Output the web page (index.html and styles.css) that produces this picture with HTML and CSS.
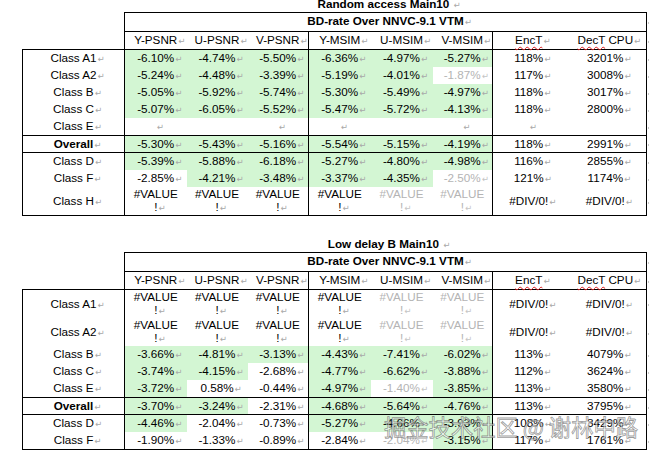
FILE: index.html
```html
<!DOCTYPE html>
<html>
<head>
<meta charset="utf-8">
<link rel="stylesheet" href="styles.css">
</head>
<body>
<div class="page">
  <p class="title t1">Random access Main10&nbsp;<i class="pm">↵</i></p>
  <table class="bd">
    <colgroup>
      <col class="c-lab"><col class="c-62"><col class="c-61"><col class="c-61"><col class="c-62"><col class="c-62"><col class="c-60"><col class="c-enc"><col class="c-dec"><col class="c-eor">
    </colgroup>
    <tr class="h1"><td class="corner" rowspan="2"></td><th class="bdh" colspan="8">BD-rate Over NNVC-9.1 VTM<i class="pm">↵</i></th><td class="eor"><b></b></td></tr>
    <tr class="h2"><th>Y-PSNR<i class="pm">↵</i></th><th>U-PSNR<i class="pm">↵</i></th><th>V-PSNR<i class="pm">↵</i></th><th>Y-MSIM<i class="pm">↵</i></th><th>U-MSIM<i class="pm">↵</i></th><th>V-MSIM<i class="pm">↵</i></th><th><span class="sp">EncT</span><i class="pm">↵</i></th><th><span class="sp">DecT</span> CPU<i class="pm">↵</i></th><td class="eor"><b></b></td></tr>
    <tr class="r"><td>Class A1<i class="pm">↵</i></td><td class="g">-6.10%<i class="pm">↵</i></td><td class="g">-4.74%<i class="pm">↵</i></td><td class="g">-5.50%<i class="pm">↵</i></td><td class="g">-6.36%<i class="pm">↵</i></td><td class="g">-4.97%<i class="pm">↵</i></td><td class="g">-5.27%<i class="pm">↵</i></td><td>118%<i class="pm">↵</i></td><td>3201%<i class="pm">↵</i></td><td class="eor"><b></b></td></tr>
    <tr class="r"><td>Class A2<i class="pm">↵</i></td><td class="g">-5.24%<i class="pm">↵</i></td><td class="g">-4.48%<i class="pm">↵</i></td><td class="g">-3.39%<i class="pm">↵</i></td><td class="g">-5.19%<i class="pm">↵</i></td><td class="g">-4.01%<i class="pm">↵</i></td><td class="n">-1.87%<i class="pm">↵</i></td><td>117%<i class="pm">↵</i></td><td>3008%<i class="pm">↵</i></td><td class="eor"><b></b></td></tr>
    <tr class="r"><td>Class B<i class="pm">↵</i></td><td class="g">-5.05%<i class="pm">↵</i></td><td class="g">-5.92%<i class="pm">↵</i></td><td class="g">-5.74%<i class="pm">↵</i></td><td class="g">-5.30%<i class="pm">↵</i></td><td class="g">-5.49%<i class="pm">↵</i></td><td class="g">-4.97%<i class="pm">↵</i></td><td>118%<i class="pm">↵</i></td><td>3017%<i class="pm">↵</i></td><td class="eor"><b></b></td></tr>
    <tr class="r"><td>Class C<i class="pm">↵</i></td><td class="g">-5.07%<i class="pm">↵</i></td><td class="g">-6.05%<i class="pm">↵</i></td><td class="g">-5.52%<i class="pm">↵</i></td><td class="g">-5.47%<i class="pm">↵</i></td><td class="g">-5.72%<i class="pm">↵</i></td><td class="g">-4.13%<i class="pm">↵</i></td><td>118%<i class="pm">↵</i></td><td>2800%<i class="pm">↵</i></td><td class="eor"><b></b></td></tr>
    <tr class="r re"><td>Class E<i class="pm">↵</i></td><td><i class="pm">↵</i></td><td></td><td><i class="pm">↵</i></td><td><i class="pm">↵</i></td><td></td><td><i class="pm">↵</i></td><td><i class="pm">↵</i></td><td></td><td class="eor"><b></b></td></tr>
    <tr class="r ov"><td><b class="bo">Overall</b><i class="pm">↵</i></td><td class="g">-5.30%<i class="pm">↵</i></td><td class="g">-5.43%<i class="pm">↵</i></td><td class="g">-5.16%<i class="pm">↵</i></td><td class="g">-5.54%<i class="pm">↵</i></td><td class="g">-5.15%<i class="pm">↵</i></td><td class="g">-4.19%<i class="pm">↵</i></td><td>118%<i class="pm">↵</i></td><td>2991%<i class="pm">↵</i></td><td class="eor"><b></b></td></tr>
    <tr class="r rd"><td>Class D<i class="pm">↵</i></td><td class="g">-5.39%<i class="pm">↵</i></td><td class="g">-5.88%<i class="pm">↵</i></td><td class="g">-6.18%<i class="pm">↵</i></td><td class="g">-5.27%<i class="pm">↵</i></td><td class="g">-4.80%<i class="pm">↵</i></td><td class="g">-4.98%<i class="pm">↵</i></td><td>116%<i class="pm">↵</i></td><td>2855%<i class="pm">↵</i></td><td class="eor"><b></b></td></tr>
    <tr class="r rd"><td>Class F<i class="pm">↵</i></td><td>-2.85%<i class="pm">↵</i></td><td class="g">-4.21%<i class="pm">↵</i></td><td class="g">-3.48%<i class="pm">↵</i></td><td class="g">-3.37%<i class="pm">↵</i></td><td class="g">-4.35%<i class="pm">↵</i></td><td class="n">-2.50%<i class="pm">↵</i></td><td>121%<i class="pm">↵</i></td><td>1174%<i class="pm">↵</i></td><td class="eor"><b></b></td></tr>
    <tr class="r2 last"><td>Class H<i class="pm">↵</i></td><td>#VALUE<br>!<i class="pm">↵</i></td><td>#VALUE<br>!<i class="pm">↵</i></td><td>#VALUE<br>!<i class="pm">↵</i></td><td>#VALUE<br>!<i class="pm">↵</i></td><td class="n">#VALUE<br>!<i class="pm">↵</i></td><td class="n">#VALUE<br>!<i class="pm">↵</i></td><td>#DIV/0!<i class="pm">↵</i></td><td>#DIV/0!<i class="pm">↵</i></td><td class="eor"><b></b></td></tr>
  </table>

  <p class="title t2">Low delay B Main10&nbsp;<i class="pm">↵</i></p>
  <table class="bd">
    <colgroup>
      <col class="c-lab"><col class="c-62"><col class="c-61"><col class="c-61"><col class="c-62"><col class="c-62"><col class="c-60"><col class="c-enc"><col class="c-dec"><col class="c-eor">
    </colgroup>
    <tr class="h1"><td class="corner" rowspan="2"></td><th class="bdh" colspan="8">BD-rate Over NNVC-9.1 VTM<i class="pm">↵</i></th><td class="eor"><b></b></td></tr>
    <tr class="h2"><th>Y-PSNR<i class="pm">↵</i></th><th>U-PSNR<i class="pm">↵</i></th><th>V-PSNR<i class="pm">↵</i></th><th>Y-MSIM<i class="pm">↵</i></th><th>U-MSIM<i class="pm">↵</i></th><th>V-MSIM<i class="pm">↵</i></th><th><span class="sp">EncT</span><i class="pm">↵</i></th><th><span class="sp">DecT</span> CPU<i class="pm">↵</i></th><td class="eor"><b></b></td></tr>
    <tr class="r2"><td>Class A1<i class="pm">↵</i></td><td>#VALUE<br>!<i class="pm">↵</i></td><td>#VALUE<br>!<i class="pm">↵</i></td><td>#VALUE<br>!<i class="pm">↵</i></td><td>#VALUE<br>!<i class="pm">↵</i></td><td class="n">#VALUE<br>!<i class="pm">↵</i></td><td class="n">#VALUE<br>!<i class="pm">↵</i></td><td>#DIV/0!<i class="pm">↵</i></td><td>#DIV/0!<i class="pm">↵</i></td><td class="eor"><b></b></td></tr>
    <tr class="r2"><td>Class A2<i class="pm">↵</i></td><td>#VALUE<br>!<i class="pm">↵</i></td><td>#VALUE<br>!<i class="pm">↵</i></td><td>#VALUE<br>!<i class="pm">↵</i></td><td>#VALUE<br>!<i class="pm">↵</i></td><td class="n">#VALUE<br>!<i class="pm">↵</i></td><td class="n">#VALUE<br>!<i class="pm">↵</i></td><td>#DIV/0!<i class="pm">↵</i></td><td>#DIV/0!<i class="pm">↵</i></td><td class="eor"><b></b></td></tr>
    <tr class="r"><td>Class B<i class="pm">↵</i></td><td class="g">-3.66%<i class="pm">↵</i></td><td class="g">-4.81%<i class="pm">↵</i></td><td class="g">-3.13%<i class="pm">↵</i></td><td class="g">-4.43%<i class="pm">↵</i></td><td class="g">-7.41%<i class="pm">↵</i></td><td class="g">-6.02%<i class="pm">↵</i></td><td>113%<i class="pm">↵</i></td><td>4079%<i class="pm">↵</i></td><td class="eor"><b></b></td></tr>
    <tr class="r"><td>Class C<i class="pm">↵</i></td><td class="g">-3.74%<i class="pm">↵</i></td><td class="g">-4.15%<i class="pm">↵</i></td><td>-2.68%<i class="pm">↵</i></td><td class="g">-4.77%<i class="pm">↵</i></td><td class="g">-6.62%<i class="pm">↵</i></td><td class="g">-3.88%<i class="pm">↵</i></td><td>112%<i class="pm">↵</i></td><td>3624%<i class="pm">↵</i></td><td class="eor"><b></b></td></tr>
    <tr class="r"><td>Class E<i class="pm">↵</i></td><td class="g">-3.72%<i class="pm">↵</i></td><td>0.58%<i class="pm">↵</i></td><td>-0.44%<i class="pm">↵</i></td><td class="g">-4.97%<i class="pm">↵</i></td><td class="n">-1.40%<i class="pm">↵</i></td><td class="g">-3.85%<i class="pm">↵</i></td><td>113%<i class="pm">↵</i></td><td>3580%<i class="pm">↵</i></td><td class="eor"><b></b></td></tr>
    <tr class="r ov"><td><b class="bo">Overall</b><i class="pm">↵</i></td><td class="g">-3.70%<i class="pm">↵</i></td><td class="g">-3.24%<i class="pm">↵</i></td><td>-2.31%<i class="pm">↵</i></td><td class="g">-4.68%<i class="pm">↵</i></td><td class="g">-5.64%<i class="pm">↵</i></td><td class="g">-4.76%<i class="pm">↵</i></td><td>113%<i class="pm">↵</i></td><td>3795%<i class="pm">↵</i></td><td class="eor"><b></b></td></tr>
    <tr class="r"><td>Class D<i class="pm">↵</i></td><td class="g">-4.46%<i class="pm">↵</i></td><td>-2.04%<i class="pm">↵</i></td><td>-0.73%<i class="pm">↵</i></td><td class="g">-5.27%<i class="pm">↵</i></td><td class="g">-4.66%<i class="pm">↵</i></td><td class="g">-3.93%<i class="pm">↵</i></td><td>108%<i class="pm">↵</i></td><td>3429%<i class="pm">↵</i></td><td class="eor"><b></b></td></tr>
    <tr class="r last"><td>Class F<i class="pm">↵</i></td><td>-1.90%<i class="pm">↵</i></td><td>-1.33%<i class="pm">↵</i></td><td>-0.89%<i class="pm">↵</i></td><td>-2.84%<i class="pm">↵</i></td><td class="n">-2.04%<i class="pm">↵</i></td><td class="g">-3.15%<i class="pm">↵</i></td><td>117%<i class="pm">↵</i></td><td>1761%<i class="pm">↵</i></td><td class="eor"><b></b></td></tr>
  </table>

  <div class="wm">掘金技术社区 @ 谢林中路</div>
</div>
</body>
</html>
```
FILE: styles.css
```css
html, body {
  margin: 0;
  padding: 0;
  background: #fff;
  overflow: hidden;
}

.page {
  position: relative;
  width: 649px;
  height: 455px;
  padding-left: 22px;
  box-sizing: border-box;
  font-family: "Liberation Sans", Arial, sans-serif;
  font-size: 11.7px;
  color: #000;
}

.title {
  margin: 0 0 0 102px;
  width: 522px;
  height: 17px;
  line-height: 17px;
  text-align: center;
  font-weight: bold;
  white-space: nowrap;
}

.t1 { margin-top: -5px; }
.t2 { margin-top: 19px; }

.pm {
  display: inline-block;
  width: 0;
  font-style: normal;
  font-weight: normal;
  font-family: "DejaVu Sans", sans-serif;
  font-size: 8.5px;
  color: #a8a8a8;
  white-space: nowrap;
  text-indent: 1px;
}

.bd {
  border-collapse: collapse;
  table-layout: fixed;
  width: 627px;
}

.c-lab { width: 102px; }
.c-62 { width: 62px; }
.c-61 { width: 61px; }
.c-60 { width: 60px; }
.c-enc { width: 72px; }
.c-dec { width: 82px; }
.c-eor { width: 3px; }

.bd th,
.bd td {
  padding: 0;
  text-align: center;
  vertical-align: middle;
  font-weight: normal;
  line-height: 13px;
  white-space: nowrap;
}

.h1 { height: 18.5px; }
.h2 { height: 18.5px; }
.r { height: 17.2px; }
.r2 { height: 28px; }
.last { height: 28.6px; }
.r.last { height: 17.6px; }

.corner { border-bottom: 1px solid #000; }

.bdh {
  border: 1px solid #000;
}
.bd th.bdh { font-weight: bold; }

.h2 th { border-bottom: 1px solid #000; }
.h2 th:nth-child(1) { border-left: 1px solid #000; }
.h2 th:nth-child(3),
.h2 th:nth-child(6),
.h2 th:nth-child(8) { border-right: 1px solid #000; }

.r td:nth-child(1),
.r2 td:nth-child(1) {
  border-left: 1px solid #000;
  border-right: 1px solid #000;
}
.r td:nth-child(4),
.r td:nth-child(7),
.r td:nth-child(9),
.r2 td:nth-child(4),
.r2 td:nth-child(7),
.r2 td:nth-child(9) {
  border-right: 1px solid #000;
}

.ov td:not(.eor) {
  border-top: 1px solid #000;
  border-bottom: 1px solid #000;
}
.last td:not(.eor) { border-bottom: 1px solid #000; }

.bo { font-weight: bold; }

.g { background: #d3f6d3; }
.n { color: #b4b4b4; }
.n .pm { color: #c4c4c4; }

.sp {
  text-decoration: underline wavy #e02020;
  text-decoration-thickness: 1px;
  text-underline-offset: 2px;
  text-decoration-skip-ink: none;
}

.eor { border: none; }
.eor b {
  display: inline-block;
  width: 2px;
  height: 2px;
  margin-left: 1px;
  background: #c8c8c8;
  vertical-align: middle;
}

.wm {
  position: absolute;
  left: 384px;
  top: 416px;
  font-family: "Noto Sans CJK SC", "Liberation Sans", sans-serif;
  font-size: 22.3px;
  line-height: 30px;
  color: rgba(255, 255, 255, 0.6);
  -webkit-text-stroke: 0.8px rgba(70, 70, 70, 0.55);
  white-space: nowrap;
}
```
